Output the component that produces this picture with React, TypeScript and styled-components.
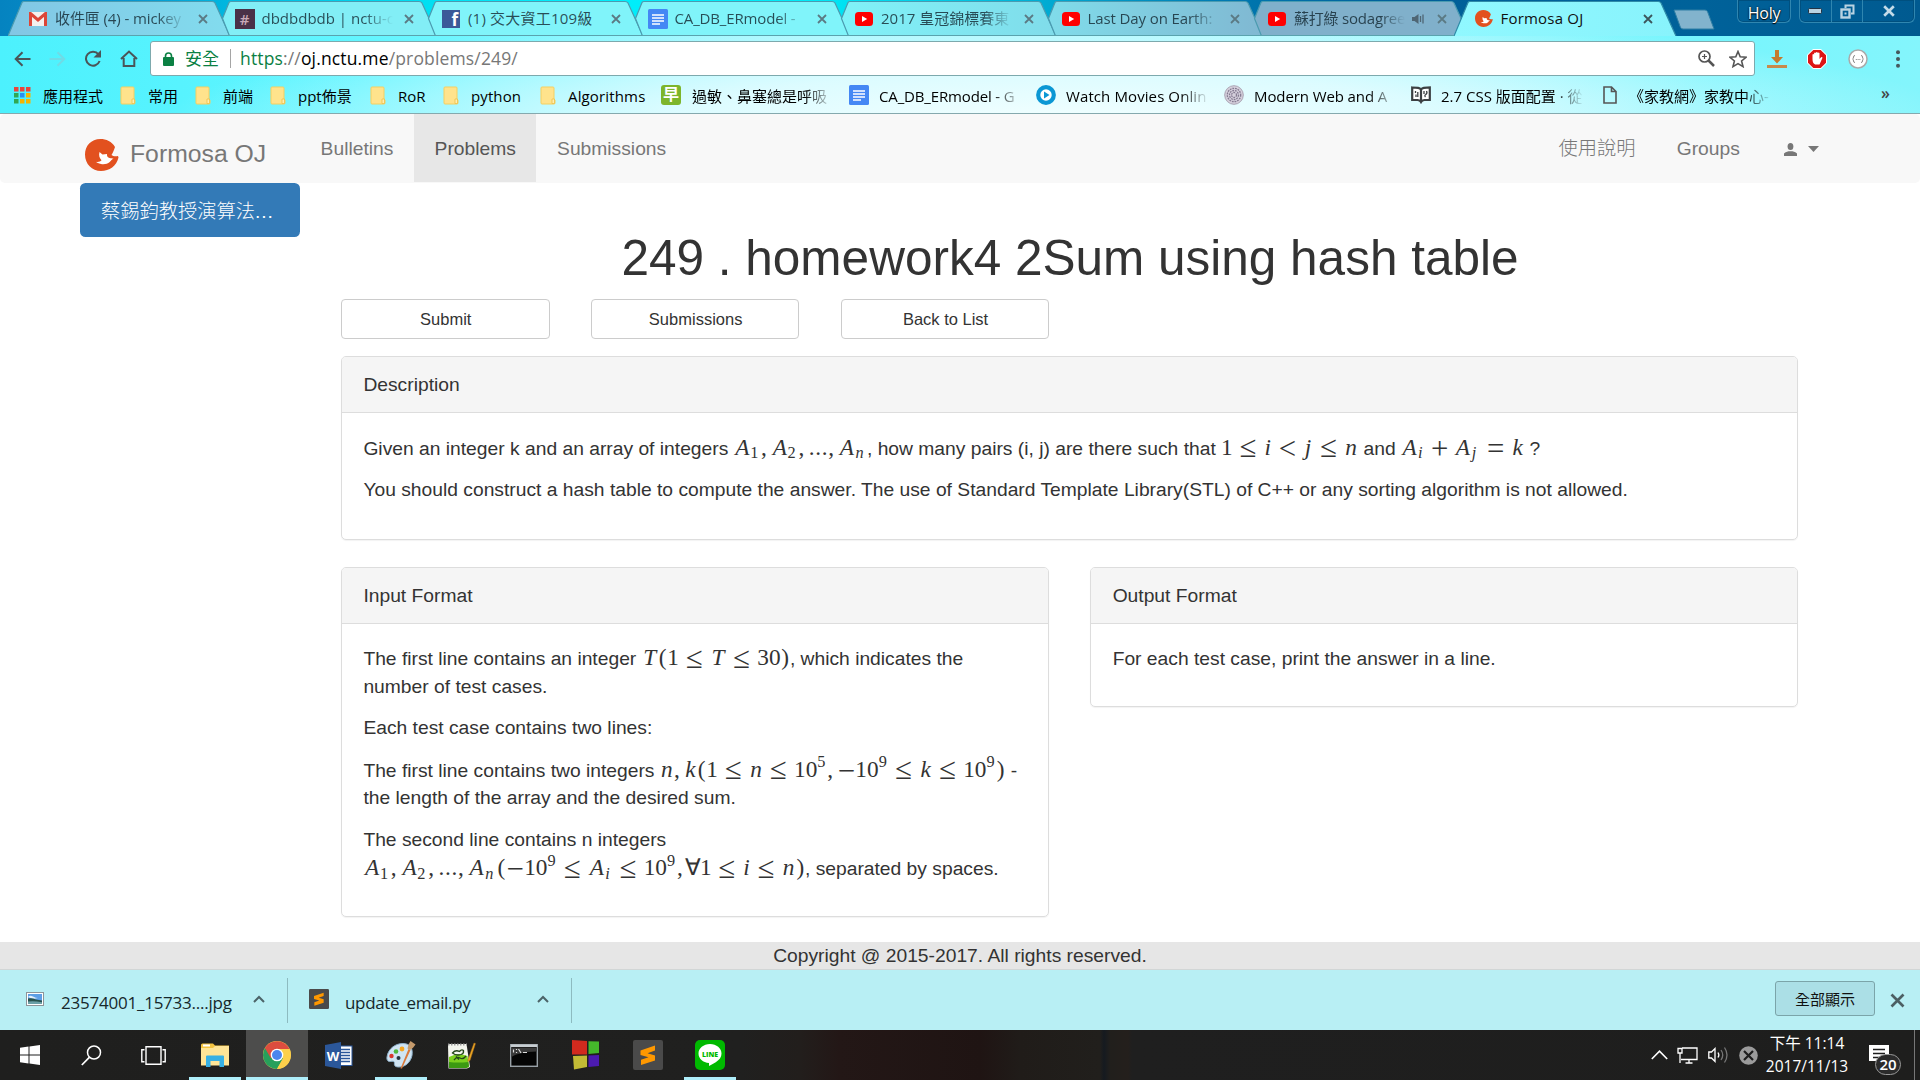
import React from "react";
import styled, { createGlobalStyle, css } from "styled-components";

const ui = `"Open Sans", "Noto Sans CJK TC", sans-serif`;
const body = `"Liberation Sans", "Noto Sans CJK TC", Arial, sans-serif`;

const Global = createGlobalStyle`
  html, body { margin: 0; padding: 0; background: #fff; overflow: hidden; }
  * { box-sizing: border-box; }
  svg { display: block; flex: none; }
`;

const Screen = styled.div`
  width: 1920px;
  height: 1080px;
  display: flex;
  flex-direction: column;
  overflow: hidden;
  background: #fff;
  font-family: ${body};
`;

/* ---------- tab strip ---------- */

const TabStrip = styled.div`
  height: 36px;
  flex: none;
  display: flex;
  align-items: flex-start;
  padding-left: 8px;
  background: linear-gradient(
    90deg, #0583c0 0, #0795cf 130px, #00b8e0 230px, #00dcf0 400px, #00eefb 560px, #00ecf8 800px,
    #00c8e4 960px, #00a0cc 1080px, #0078b0 1230px, #005f98 1400px, #00629a 1700px, #005a90 1920px
  );
`;

const TabBox = styled.div<{ $order: number }>`
  position: relative;
  z-index: ${(p) => p.$order};
  width: 206.5px;
  height: 36px;
  flex: none;
  display: flex;
  align-items: center;
  padding: 1px 2.5px 0 20px;
  gap: 7px;
`;

const TabShape = styled.svg`
  position: absolute;
  left: 0;
  top: 0;
  z-index: -1;
`;

const TabIcon = styled.div`
  width: 20px;
  height: 20px;
  display: flex;
  align-items: center;
  justify-content: center;
`;

const TabTitle = styled.div<{ $active?: boolean; $fade?: boolean; $spacing?: number }>`
  flex: 1;
  min-width: 0;
  height: 24px;
  line-height: 22px;
  overflow: hidden;
  white-space: nowrap;
  font-family: ${ui};
  font-size: 15px;
  letter-spacing: ${(p) => p.$spacing ?? 0}px;
  color: ${(p) => (p.$active ? "#111" : "rgba(20,40,50,.82)")};
  ${(p) => p.$fade && css`mask-image: linear-gradient(90deg, #000 78%, transparent 100%);`}
`;

const CloseSlot = styled.div`
  width: 19px;
  height: 20px;
  display: flex;
  align-items: center;
  justify-content: center;
`;

const NewTab = styled.svg`
  margin: 9px 0 0 13px;
`;

const WindowTools = styled.div`
  margin-left: auto;
  display: flex;
  align-items: flex-start;
`;

const Chip = styled.div<{ $w: number }>`
  width: ${(p) => p.$w}px;
  height: 23px;
  display: flex;
  align-items: center;
  justify-content: center;
  border: 1px solid #2f86b0;
  border-top: 0;
  border-radius: 0 0 6px 6px;
  box-shadow: inset 0 0 0 1px #00507f;
  color: #fff;
  font: 16px/22px ${ui};
  letter-spacing: -0.3px;
  padding-top: 3px;
  text-shadow: 0 0 2px #000, 0 1px 1px #000;
`;

const WinGroup = styled(Chip)`
  margin: 0 5px 0 8px;
  padding-top: 0;
`;

const WinButton = styled.div<{ $w: number; $line?: boolean }>`
  width: ${(p) => p.$w}px;
  height: 22px;
  display: flex;
  align-items: center;
  justify-content: center;
  border-left: ${(p) => (p.$line ? "1px solid #2f86b0" : "0")};
`;

/* ---------- toolbar and bookmarks ---------- */

const ChromeTop = styled.div`
  height: 78px;
  flex: none;
  border-bottom: 1px solid #85a9ae;
  background:
    radial-gradient(ellipse 900px 120px at 1060px 90px, rgba(244,255,255,1) 0%, rgba(226,252,255,.92) 45%, rgba(200,250,255,0) 100%),
    linear-gradient(90deg, #4cf1fd 0, #62f5ff 360px, #96f7ff 760px, #a0f8ff 1300px, #76f5fd 1700px, #84f5fc 1920px);
`;

const Toolbar = styled.div`
  height: 42px;
  display: flex;
  align-items: center;
  padding: 3px 12px 0 14px;
`;

const NavIcons = styled.div`
  width: 136px;
  display: flex;
  align-items: center;
  gap: 18px;
`;

const Omnibox = styled.div`
  width: 1605px;
  height: 35px;
  display: flex;
  align-items: center;
  padding: 0 7px 0 12px;
  background: #fff;
  border: 1px solid #7da9ad;
  border-radius: 3px;
  font: 17.5px/33px ${ui};
  color: #777;
`;

const Secure = styled.span`
  color: #0b8043;
  width: 45px;
  margin-left: 11px;
  font-size: 17px;
`;

const UrlText = styled.span`
  flex: 1;
  padding-left: 9px;
  border-left: 1px solid #a5a5a5;
  line-height: 19px;
  letter-spacing: 0.15px;
`;

const Scheme = styled.span` color: #0b8043; `;
const Host = styled.span` color: #000; `;

const OmniIcons = styled.div`
  display: flex;
  gap: 14px;
  align-items: center;
`;

const Extensions = styled.div`
  display: flex;
  flex: 1;
  align-items: center;
  justify-content: space-between;
  padding-left: 12px;
`;

const Bookmarks = styled.div`
  height: 35px;
  display: flex;
  align-items: center;
  padding: 0 30px 1px 14px;
`;

const Bookmark = styled.div<{ $w: number; $gap?: number }>`
  width: ${(p) => p.$w}px;
  display: flex;
  align-items: center;
  gap: ${(p) => p.$gap ?? 12}px;
`;

const BookmarkText = styled.span<{ $w?: number; $spacing?: number }>`
  font: 15px/26px ${ui};
  height: 25px;
  color: #000;
  white-space: nowrap;
  letter-spacing: ${(p) => p.$spacing ?? 0}px;
  ${(p) => p.$w && css`width: ${p.$w}px; mask-image: linear-gradient(90deg, #000 80%, transparent 100%);`}
`;

const More = styled.span`
  margin-left: auto;
  font: 600 16px/18px ${ui};
  padding-bottom: 4px;
  color: #444;
`;

const GlyphBadge = styled.div`
  width: 20px;
  height: 20px;
  border-radius: 3px;
  background: #7db52b;
  color: #fff;
  font: 700 16px/19px ${ui};
  text-align: center;
`;

const HashBadge = styled.div`
  width: 20px;
  height: 20px;
  background: #4a3148;
  color: #c9a9b8;
  font: 600 15px/20px ${ui};
  text-align: center;
`;

const FbBadge = styled.div`
  width: 18px;
  height: 18px;
  background: #3b5998;
  color: #fff;
  font: 700 17px/19px ${ui};
  text-align: right;
  padding-right: 2px;
`;

/* ---------- page ---------- */

const Navbar = styled.nav`
  height: 69px;
  flex: none;
  display: flex;
  background: #f8f8f8;
  border-radius: 5px;
  padding: 0 81px 0 85px;
  font-size: 19.25px;
  font-weight: 300;
  color: #777;
`;

const Brand = styled.div`
  width: 215px;
  display: flex;
  align-items: flex-start;
  padding-top: 25px;
  gap: 11px;
  font-size: 24.75px;
  line-height: 30px;
  white-space: nowrap;
`;

const NavItem = styled.div<{ $active?: boolean }>`
  height: 68px;
  padding: 21px 20.6px 19px;
  line-height: 28px;
  white-space: nowrap;
  color: ${(p) => (p.$active ? "#555" : "#777")};
  background: ${(p) => (p.$active ? "#e7e7e7" : "transparent")};
`;

const NavRight = styled.div`
  margin-left: auto;
  display: flex;
`;

const UserMenu = styled(NavItem)`
  display: flex;
  align-items: center;
  gap: 11px;
  padding: 2px 19.6px 0 24px;
`;

const Page = styled.main`
  height: 759px;
  flex: none;
  display: flex;
  padding: 0 122px 0 80px;
  color: #333;
  font-size: 19.25px;
  line-height: 27.5px;
`;

const Sidebar = styled.aside`
  width: 261px;
  flex: none;
`;

const GroupPill = styled.div`
  width: 220px;
  height: 54px;
  padding: 0 21px;
  line-height: 58px;
  border-radius: 5.5px;
  background: #337ab7;
  color: #fff;
  font-weight: 300;
  white-space: nowrap;
`;

const Ellipsis = styled.span`
  letter-spacing: 0.9px;
`;

const Main = styled.section`
  flex: 1;
  min-width: 0;
`;

const Title = styled.h1`
  margin: 0;
  padding: 48px 0 13.5px 1px;
  font-size: 49.5px;
  line-height: 54.5px;
  font-weight: 400;
  text-align: center;
`;

const Actions = styled.div`
  display: flex;
  gap: 41.4px;
  margin-bottom: 17px;
`;

const Action = styled.button`
  width: 208.5px;
  height: 40px;
  padding: 0 0 0 1px;
  border: 1px solid #ccc;
  border-radius: 4px;
  background: #fff;
  color: #333;
  font: 16.5px/24px ${body};
`;

const Columns = styled.div`
  display: grid;
  grid-template-columns: 1fr 1fr;
  column-gap: 41.5px;
  align-items: start;
`;

const PanelBox = styled.div<{ $h: number }>`
  height: ${(p) => p.$h}px;
  margin-bottom: 27.5px;
  border: 1px solid #ddd;
  border-radius: 5px;
  box-shadow: 0 1px 1px rgba(0, 0, 0, 0.05);
  overflow: hidden;
`;

const PanelHead = styled.div`
  height: 56px;
  padding: 13.5px 21.4px;
  background: #f5f5f5;
  border-bottom: 1px solid #ddd;
`;

const PanelBody = styled.div`
  padding: 20.6px 21.4px;
`;

const Para = styled.p<{ $lead?: number }>`
  margin: 0 0 13.75px;
  padding-top: ${(p) => p.$lead ?? 0}px;
  white-space: nowrap;
`;

const FormulaLine = styled.span`
  display: block;
  padding-top: 1.5px;
`;

const Footer = styled.footer`
  height: 28px;
  flex: none;
  background: #e6e6e6;
  border-bottom: 1px solid #d2d6d6;
  text-align: center;
  color: #333;
  font-size: 19.25px;
  line-height: 27px;
`;

/* ---------- math ---------- */

const MathBox = styled.span`
  display: inline-flex;
  align-items: baseline;
  height: 22px;
  line-height: 22px;
  font-family: "Liberation Serif", serif;
  font-size: 23.3px;
  white-space: nowrap;
`;

const Atom = styled.span<{ $w: number; $kind: string; $italic: boolean }>`
  display: inline-flex;
  justify-content: center;
  line-height: 20px;
  width: ${(p) => p.$w}em;
  font-style: ${(p) => (p.$italic ? "italic" : "normal")};
  ${(p) => p.$kind === "rel" && css`margin: 0 0.278em;`}
  ${(p) => p.$kind === "bin" && css`margin: 0 0.222em;`}
  ${(p) => p.$kind === "punct" && css`margin-right: 0.167em;`}
  ${(p) => p.$kind === "sub" && css`font-size: 0.7em; position: relative; top: 0.21em; left: -0.06em; margin-right: 0.09em;`}
  ${(p) => p.$kind === "sup" && css`font-size: 0.7em; position: relative; top: -0.56em; margin-right: 0.09em;`}
`;

const Wide = styled.span<{ $drop: number }>`
  position: relative;
  top: ${(p) => p.$drop}em;
  font-size: 1.32em;
  line-height: 16px;
`;

const widths: Record<string, number> = {
  A: 0.75, n: 0.6, k: 0.552, i: 0.345, j: 0.44, T: 0.7,
  ",": 0.278, ".": 0.278, "(": 0.4, ")": 0.4, "∀": 0.556,
  "≤": 0.778, "<": 0.778, "=": 0.778, "+": 0.778, "−": 0.778,
};

/* Reads a compact notation: _x is a subscript, ^x a superscript. */
const Tex = ({ children }: { children: string }) => {
  const out: React.ReactNode[] = [];
  let script = "";
  [...children].forEach((c, i) => {
    if (c === "_" || c === "^") {
      script = c === "_" ? "sub" : "sup";
      return;
    }
    const wide = "≤<=+−".includes(c);
    let kind = script;
    if (!kind) kind = "≤<=".includes(c) ? "rel" : c === "+" ? "bin" : c === "," ? "punct" : "ord";
    out.push(
      <Atom key={i} $w={widths[c] ?? 0.5} $kind={kind} $italic={/[A-Za-z]/.test(c)}>
        {wide ? <Wide $drop={c === "≤" ? 0.08 : 0.13}>{c}</Wide> : c}
      </Atom>
    );
    script = "";
  });
  return <MathBox>{out}</MathBox>;
};

/* ---------- downloads shelf ---------- */

const Shelf = styled.div`
  height: 60px;
  flex: none;
  display: flex;
  align-items: center;
  padding-right: 15px;
  background: #b8eff4;
  font-family: ${ui};
`;

const Download = styled.div<{ $w: number; $pad: number }>`
  width: ${(p) => p.$w}px;
  height: 45px;
  display: flex;
  align-items: center;
  padding: 0 22px 2px ${(p) => p.$pad}px;
  border-right: 1px solid #8dbbc0;
`;

const FileName = styled.span<{ $gap: number; $spacing: number }>`
  flex: 1;
  margin-left: ${(p) => p.$gap}px;
  padding-top: 8px;
  font-size: 17px;
  line-height: 24px;
  letter-spacing: ${(p) => p.$spacing}px;
  color: #16282b;
`;

const ShowAll = styled.button`
  width: 100px;
  height: 35px;
  margin: 0 15px 3px auto;
  padding: 0;
  border: 1px solid #7ba4a9;
  border-radius: 3px;
  background: #abdfe6;
  color: #111;
  font: 15px/30px ${ui};
`;

/* ---------- taskbar ---------- */

const Taskbar = styled.div`
  height: 50px;
  flex: none;
  display: flex;
  background: linear-gradient(
    90deg, #1f1f1e 0, #20201f 740px, #221e1c 800px, #231716 840px, #1f1413 980px, #201c19 1020px,
    #211f1c 1100px, #151a20 1104px, #211f1c 1110px, #241f1c 1128px, #1f1f1f 1132px, #1e1e1d 1920px
  );
`;

const Tasks = styled.div`
  display: flex;
  margin-left: -1px;
`;

const Task = styled.div<{ $active?: boolean; $running?: boolean }>`
  position: relative;
  width: 61.8px;
  height: 50px;
  display: flex;
  align-items: center;
  justify-content: center;
  background: ${(p) => (p.$active ? "#4d4d4c" : "transparent")};
  ${(p) =>
    (p.$running || p.$active) &&
    css`
      &::after {
        content: "";
        position: absolute;
        bottom: 0;
        left: ${p.$active ? 0 : 5}px;
        right: ${p.$active ? 0 : 5}px;
        height: 3px;
        background: #aeeefa;
      }
    `}
`;

const Tray = styled.div`
  margin-left: auto;
  display: flex;
  align-items: center;
`;

const Clock = styled.div`
  width: 84px;
  margin: 0 20px 0 7px;
  display: flex;
  flex-direction: column;
  align-items: center;
  color: #fff;
  white-space: nowrap;
  font: 15.5px/23px ${ui};
`;

const Notice = styled.div`
  position: relative;
  width: 46px;
  height: 50px;
  padding-top: 15px;
  border-right: 1px solid #777;
  margin-right: 5px;
`;

const Count = styled.span`
  position: absolute;
  left: 6px;
  top: 24px;
  width: 26px;
  height: 21px;
  border: 1px solid #999;
  border-radius: 11px;
  background: #2b2b2b;
  color: #fff;
  font: 600 15px/18px ${ui};
  text-align: center;
`;

/* ---------- drawings ---------- */

const Cross = ({ s = 10, c = "#4f6f78", w = 1.8 }) => (
  <svg width={s} height={s} viewBox="0 0 10 10">
    <path d="M1 1l8 8M9 1l-8 8" stroke={c} strokeWidth={w} />
  </svg>
);

const Gmail = () => (
  <svg width="18" height="14" viewBox="0 0 18 14">
    <rect width="18" height="14" rx="1.5" fill="#f4f0ee" />
    <path d="M1.5 14V1.5L9 8l7.500-6.500V14" fill="none" stroke="#dc4638" strokeWidth="3" />
  </svg>
);

const Doc = () => (
  <svg width="20" height="20" viewBox="0 0 20 20">
    <rect width="20" height="20" rx="1.500" fill="#4487f4" />
    <path d="M4 6h12M4 9h12M4 12h12M4 15h8" stroke="#fff" strokeWidth="1.500" />
  </svg>
);

const Tube = () => (
  <svg width="18" height="14" viewBox="0 0 18 14">
    <rect width="18" height="14" rx="3.500" fill="#f00" />
    <path d="M7 4l5.200 3L7 10z" fill="#fff" />
  </svg>
);

const Fox = ({ w = 34 }) => (
  <svg width={w} height={(w * 32) / 34} viewBox="0 0 34 32">
    <path
      d="M30 8C27 2.500 21 0 15.500 0 6 0 0 7 0 15.500 0 25 7 32 16 32c8.500 0 15.500-5 17.500-13.500l-.5-1.500c-2.500.8-5 .2-6.500-1 2-3 2.500-5.500 3.500-8z"
      fill="#e2511f"
    />
    <path
      d="M14.500 13l3 2.500 4.500-.5c-.3 2.500 1 4 3.500 4.300 1.500.2 2 .2 3 .2-1.500 1-2.500 1.800-3.800 3.500-2.200 2-5.500 2.500-8.700 2-2.500-.3-4-1.200-5-2.200 2 .5 4.500 0 5.500-1.500-2-2-3-5-2-8.300z"
      fill="#fff"
    />
  </svg>
);

const Folder = () => (
  <svg width="16" height="19" viewBox="0 0 16 19">
    <path d="M1 2q0-1 1-1h11q1 0 1 1v11l1 1v3q0 1-1 1H2q-1 0-1-1z" fill="#ffe38c" stroke="#f5cf61" />
    <path d="M12 17.500v-4.500h2.500v4.500z" fill="#ffeeb0" stroke="#eec04a" strokeWidth=".8" />
  </svg>
);

const Apps = () => (
  <svg width="17" height="17" viewBox="0 0 17 17">
    {["#e8453c", "#e8453c", "#e8453c", "#30a853", "#2a8ef0", "#f5b400", "#30a853", "#f5b400", "#f5b400"].map((c, i) => (
      <rect key={i} x={(i % 3) * 6} y={Math.floor(i / 3) * 6} width="4.500" height="4.500" fill={c} />
    ))}
  </svg>
);

const Sublime = ({ s = 30 }) => (
  <svg width={s} height={s} viewBox="0 0 30 30">
    <rect width="30" height="30" rx="2" fill="#4a4a4a" />
    <path d="M7.500 10.500L22 5.500v5l-7.500 2.800L22 15.500v5L8 25v-5.200l7.500-2.500-8-2.300z" fill="#ff9800" />
  </svg>
);

const Caret = () => (
  <svg width="12" height="8" viewBox="0 0 12 8">
    <path d="M1 7l5-5 5 5" fill="none" stroke="#4c6468" strokeWidth="2" />
  </svg>
);

const BackArrow = ({ flip = false, c = "#4a5558" }) => (
  <svg width="17" height="16" viewBox="0 0 17 16" transform={flip ? "scale(-1 1)" : undefined}>
    <path d="M16.500 8H2M8.500 1.200L1.700 8l6.800 6.800" fill="none" stroke={c} strokeWidth="2" />
  </svg>
);

const Reload = () => (
  <svg width="18" height="17" viewBox="0 0 18 17">
    <path d="M14.500 4.300A7 7 0 1 0 15.600 11" fill="none" stroke="#4a5558" strokeWidth="2" />
    <path d="M17 0v7.500H9.500z" fill="#4a5558" />
  </svg>
);

const Home = () => (
  <svg width="18" height="17" viewBox="0 0 18 17">
    <path d="M1 9L9 1.500 17 9M3.700 8v8h10.600V8" fill="none" stroke="#4a5558" strokeWidth="2" />
  </svg>
);

const Lock = () => (
  <svg width="11" height="14" viewBox="0 0 11 14">
    <rect y="5" width="11" height="9" rx="1" fill="#0b8043" />
    <path d="M2.500 6V4a3 3 0 0 1 6 0v2" fill="none" stroke="#0b8043" strokeWidth="1.600" />
  </svg>
);

const ZoomGlass = () => (
  <svg width="17" height="17" viewBox="0 0 17 17">
    <circle cx="6.500" cy="6.500" r="5.500" fill="none" stroke="#555" strokeWidth="1.700" />
    <path d="M4 6.500h5M6.500 4v5" stroke="#555" strokeWidth="1.200" />
    <path d="M10.500 10.500L16 16" stroke="#555" strokeWidth="2.500" />
  </svg>
);

const Star = () => (
  <svg width="18" height="18" viewBox="0 0 18 18">
    <path d="M9 1.500l2.200 5.300 5.800.5-4.400 3.700 1.400 5.600L9 13.600l-5 3 1.400-5.600L1 7.300l5.800-.5z" fill="none" stroke="#555" strokeWidth="1.600" />
  </svg>
);

const GetArrow = () => (
  <svg width="20" height="18" viewBox="0 0 20 18">
    <path d="M8 0h4v7h4l-6 6.500L4 7h4z" fill="#c47a2c" />
    <rect y="15" width="20" height="3" fill="#c88a4a" />
  </svg>
);

const Adblock = () => (
  <svg width="20" height="20" viewBox="0 0 20 20">
    <path d="M6 0h8l6 6v8l-6 6H6l-6-6V6z" fill="#fff" />
    <path d="M6.300 1h7.400L19 6.300v7.400L13.700 19H6.300L1 13.700V6.300z" fill="#dd1414" />
    <path d="M5.500 10V5.500q.8-1 1.600 0V4q.9-1.200 1.800 0v-.6q.9-1 1.800 0V4q1-1 1.800 0v6l1.600-1.800q1.500-.4 1.300.7l-2.900 6.600H8.200q-2.700-1-2.700-5.500z" fill="#fff" />
  </svg>
);

const Braces = () => (
  <svg width="20" height="20" viewBox="0 0 20 20">
    <circle cx="10" cy="10" r="9" fill="#fff" stroke="#aaa" strokeWidth="1.500" />
    <path d="M7 6.500q-1.500 0-1.500 1.500t-1 2q1 .5 1 2T7 13.500M13 6.500q1.500 0 1.500 1.500t1 2q-1 .5-1 2t-1.500 1.500" fill="none" stroke="#888" />
    <path d="M7.800 10.500h1M9.600 10.500h1M11.400 10.500h1" stroke="#888" />
  </svg>
);

const Dots = () => (
  <svg width="20" height="18" viewBox="0 0 20 18">
    {[2.200, 9, 15.800].map((y) => <circle key={y} cx="10" cy={y} r="2" fill="#46595d" />)}
  </svg>
);

const Play = () => (
  <svg width="20" height="20" viewBox="0 0 20 20">
    <circle cx="10" cy="10" r="7.800" fill="#fff" stroke="#0b97d4" strokeWidth="4.200" />
    <path d="M8 6.500l5.500 3.500L8 13.500z" fill="#0b97d4" />
  </svg>
);

const Mesh = () => (
  <svg width="20" height="20" viewBox="0 0 20 20">
    <circle cx="10" cy="10" r="9.300" fill="#d5d0dc" stroke="#aaa3b3" />
    {[2.500, 4.500, 6.700].map((r) => (
      <circle key={r} cx="10" cy="10" r={r} fill="none" stroke="#857b92" strokeWidth="1.300" strokeDasharray="1.800 .9" />
    ))}
  </svg>
);

const Book = () => (
  <svg width="20" height="18" viewBox="0 0 20 18">
    <path d="M1.200 1.500l6 .3Q9 2 10 3.500q1-1.500 2.800-1.700l6-.3v12.500h-5.500Q11 14.200 10 16q-1-1.800-3.300-2H1.200zM10 3v13" fill="#fff" stroke="#3b3f42" strokeWidth="2.200" />
    <path d="M4.500 5v2M5 8.500v2.500M6.800 6v5M13 5v3M15.500 5q1.200 2-.8 3.500-1.500 1-.2 2.500" fill="none" stroke="#3b3f42" strokeWidth="1.300" />
  </svg>
);

const PageIcon = () => (
  <svg width="14" height="18" viewBox="0 0 14 18">
    <path d="M1 1h7.500L13 5.500V17H1zM8.500 1v4.500H13" fill="none" stroke="#555" strokeWidth="1.600" />
  </svg>
);

const Speaker = () => (
  <svg width="13" height="12" viewBox="0 0 13 12">
    <path d="M0 4h2.500L6.500 1v10L2.500 8H0z" fill="#4f6674" />
    <path d="M8.500 3v6M11 1.500v9" stroke="#4f6674" strokeWidth="1.300" />
  </svg>
);

const User = () => (
  <svg width="13" height="13" viewBox="0 0 13 13">
    <ellipse cx="6.500" cy="3.500" rx="2.900" ry="3.500" fill="#777" />
    <path d="M0 13v-2.500Q1 9 4.500 8.200h4Q12 9 13 10.500V13z" fill="#777" />
  </svg>
);

const Picture = () => (
  <svg width="18" height="14" viewBox="0 0 18 14">
    <rect x=".5" y=".5" width="17" height="13" fill="#fff" stroke="#8d9499" />
    <rect x="2" y="2" width="14" height="10" fill="#5d9fe6" />
    <path d="M2 5q2-2 5-.5t5 1.500l-5 1z" fill="#e3f0fb" />
    <path d="M2 6.500q4-1 8 1l6 1v3.500H2z" fill="#28524e" />
    <path d="M2 9.500q6-1 14 .8V12H2z" fill="#6ba0a8" />
  </svg>
);

const Windows = () => (
  <svg width="20" height="20" viewBox="0 0 20 20">
    <path d="M0 2.800l8.500-1.200v7.900H0zM9.500 1.400L20 0v9.500H9.500zM0 10.500h8.500v7.900L0 17.200zM9.500 10.500H20V20L9.500 18.600z" fill="#fff" />
  </svg>
);

const Search = () => (
  <svg width="21" height="21" viewBox="0 0 21 21">
    <circle cx="13" cy="7.500" r="6.500" fill="none" stroke="#fff" strokeWidth="1.500" />
    <path d="M8.300 12.300L.8 20" stroke="#fff" strokeWidth="1.700" />
  </svg>
);

const TaskView = () => (
  <svg width="25" height="19" viewBox="0 0 25 19">
    <path d="M5 .7h15v17.600H5zM3.500 3.700H.8v12h2.700M21.500 3.700h2.700v12h-2.700" fill="none" stroke="#fff" strokeWidth="1.400" />
  </svg>
);

const Explorer = () => (
  <svg width="28" height="24" viewBox="0 0 28 24">
    <path d="M0 2q0-1.500 1.500-1.500H12l2 2h14V22H0z" fill="#f5c542" />
    <path d="M0 5h12l2-2h14v19.500H0z" fill="#ffe597" />
    <rect x="2" y="1.500" width="7" height="2" fill="#fff" />
    <path d="M5 13.500q0-1 1-1h16q1 0 1 1V24h-4.500v-6h-9v6H5z" fill="#37b0e4" />
  </svg>
);

const ChromeLogo = () => (
  <svg width="28" height="28" viewBox="0 0 28 28">
    <circle cx="14" cy="14" r="14" fill="#fdd04b" />
    <path d="M14 14L1.880 7A14 14 0 0 0 14 28l6-10.500z" fill="#27a05b" />
    <path d="M1.880 7A14 14 0 0 1 26.500 8H14l-6 9.500z" fill="#dc4d3f" />
    <path d="M14 28L20 17.500 26.500 8A14 14 0 0 1 14 28z" fill="#fdd04b" />
    <circle cx="14" cy="14" r="6.300" fill="#fff" />
    <circle cx="14" cy="14" r="5" fill="#4b86ee" />
  </svg>
);

const Word = () => (
  <svg width="28" height="27" viewBox="0 0 28 27">
    <rect x="13" y="4" width="14" height="19.500" fill="#fff" stroke="#2b579a" />
    <path d="M16 7.500h9M16 10.500h9M16 13.500h9M16 16.500h9M16 19.500h9" stroke="#2b579a" strokeWidth="1.500" />
    <path d="M0 3L16 0v27L0 24z" fill="#2b579a" />
    <text x="8" y="18.500" fill="#fff" fontFamily="Open Sans" fontWeight="700" fontSize="13" textAnchor="middle">W</text>
  </svg>
);

const Paint = () => (
  <svg width="30" height="28" viewBox="0 0 30 28">
    <path d="M1 16C2 8 9 2.500 17 2.500c8 0 10 6 9 12-1.500 7-7 11.500-13 11.500-4 0-5-1.500-4.500-4 0-2-2-2-4-1.500C2 21 .5 19 1 16z" fill="#cfe4f3" stroke="#8fb2cc" />
    <circle cx="5.500" cy="15" r="2.200" fill="#d8382e" />
    <circle cx="10" cy="10.500" r="2.300" fill="#50b83c" />
    <circle cx="16" cy="8" r="2.400" fill="#f5a623" />
    <circle cx="12.500" cy="17" r="2" fill="#26343d" />
    <path d="M14.500 27.500L22.500 8l2 1L16 27.500z" fill="#d9783a" />
    <path d="M21.500 7.500q.5-4.500 3-7.500l5 3.500q-2 3.500-5.500 5.500z" fill="#c49a6c" />
  </svg>
);

const Notepad = () => (
  <svg width="28" height="27" viewBox="0 0 28 27">
    <path d="M0 2h18.500l3.500 23-3 1.500H.5z" fill="#f4f6ee" />
    <path d="M1 15q9-5 18.500-1l1.500 11-2.500 1H1z" fill="#7cd11f" />
    <path d="M1 20q9 1 19.500 0l.5 4.500-2.500 1.500H1z" fill="#3c9a12" />
    <path d="M4.500 11q3-3.500 7-1.500 2-2.500 4-1 .5 3-2.500 4-5 1.500-8.500-1.500zM6 18q3-4 6-2t6-2M8 14.500l3 3" fill="none" stroke="#24451a" strokeWidth="1.300" />
    <path d="M0 2.500h19" stroke="#999" strokeWidth="2" strokeDasharray="1.500 1.500" />
    <path d="M20 17.500L26 1l1.500.6L22 18.500l-2 1z" fill="#eda823" stroke="#a4681a" strokeWidth=".5" />
  </svg>
);

const Cmd = () => (
  <svg width="28" height="23" viewBox="0 0 28 23">
    <rect x=".7" y=".7" width="26.600" height="21.600" fill="#050505" stroke="#98a0a6" strokeWidth="1.400" />
    <rect x="1" y=".5" width="26" height="2.500" fill="#c7cdd1" />
    <path d="M1.500 3.500h25v4Q8 8 1.500 13z" fill="#3a3a3a" />
    <path d="M3.500 5.500v3M6.500 5v1M6.500 8v1M8.500 5l2.500 4M13 8.500h4" stroke="#ddd" strokeWidth="1.200" />
  </svg>
);

const Blocks = () => (
  <svg width="28" height="30" viewBox="0 0 28 30">
    <path d="M0 0l15 1v13.500H0z" fill="#d12a1e" />
    <path d="M16.500 1.200L27 1.500V13l-10.500 1z" fill="#45b82b" />
    <path d="M1 16l14-.5V27L2 29.500z" fill="#c2bb35" />
    <path d="M16.500 15.500L27 15v11l-10.500 1z" fill="#4c1bb0" />
  </svg>
);

const Line = () => (
  <svg width="30" height="30" viewBox="0 0 30 30">
    <rect width="30" height="30" rx="5" fill="#00b900" />
    <path d="M15 4C8.500 4 3.500 8.300 3.500 13.500S8 22.500 14 23v3q8-4 11-7.500 1.500-2.300 1.500-5C26.500 8.300 21.500 4 15 4z" fill="#fff" />
    <text x="15" y="16.500" fill="#00b900" fontFamily="Open Sans" fontWeight="800" fontSize="7" textAnchor="middle">LINE</text>
  </svg>
);

const TrayUp = () => (
  <svg width="17" height="10" viewBox="0 0 17 10">
    <path d="M.8 9L8.500 1.200 16.200 9" fill="none" stroke="#fff" strokeWidth="1.600" />
  </svg>
);

const Network = () => (
  <svg width="21" height="17" viewBox="0 0 21 17">
    <path d="M5 1h15v11.500H4M12 12.500V16M8.500 16h7M1 1.500h4v4.500H1zM3 6v10" fill="none" stroke="#fff" strokeWidth="1.300" />
  </svg>
);

const Volume = () => (
  <svg width="22" height="18" viewBox="0 0 22 18">
    <path d="M.8 6h2.700L7 2.500v13L3.500 12H.8z" fill="none" stroke="#fff" strokeWidth="1.300" />
    <path d="M10 6.500q1.700 2.500 0 5" fill="none" stroke="#fff" strokeWidth="1.300" />
    <path d="M13 4q3.500 5 0 10M16.500 1.500q5 7.500 0 15" fill="none" stroke="#777" strokeWidth="1.300" />
  </svg>
);

const TrayCross = () => (
  <svg width="19" height="19" viewBox="0 0 19 19">
    <circle cx="9.500" cy="9.500" r="9.300" fill="#9b9b9b" />
    <path d="M5 5l9 9M14 5l-9 9" stroke="#1d1d1d" strokeWidth="2.200" />
  </svg>
);

const TrayIcons = styled.div`
  display: flex;
  align-items: center;
  gap: 9.5px;
`;

const NoteIcon = () => (
  <svg width="20" height="20" viewBox="0 0 20 20">
    <path d="M0 0h20v16h-8l-4 4v-4H0z" fill="#fff" />
    <path d="M4 4.500h12M4 8.500h12M4 12.500h7" stroke="#1e1e1e" strokeWidth="1.300" />
  </svg>
);

/* ---------- data ---------- */

type TabInfo = { icon: React.ReactNode; title: string; fill: string; fade?: boolean; sound?: boolean; spacing?: number };

const tabs: TabInfo[] = [
  { icon: <Gmail />, title: "收件匣 (4) - mickey", fill: "url(#tabA)", fade: true, spacing: -0.1 },
  { icon: <HashBadge>#</HashBadge>, title: "dbdbdbdb | nctu-c", fill: "#82eef6", fade: true },
  { icon: <FbBadge>f</FbBadge>, title: "(1) 交大資工109級", fill: "#80f4fa", spacing: 0.2 },
  { icon: <Doc />, title: "CA_DB_ERmodel -", fill: "#80f4fa", fade: true, spacing: -0.15 },
  { icon: <Tube />, title: "2017 皇冠錦標賽東", fill: "url(#tabE)", fade: true },
  { icon: <Tube />, title: "Last Day on Earth:", fill: "url(#tabF)", fade: true, spacing: -0.1 },
  { icon: <Tube />, title: "蘇打綠 sodagree", fill: "#80b0cb", fade: true, sound: true, spacing: -0.2 },
  { icon: <Fox w={18} />, title: "Formosa OJ", fill: "url(#tabH)", spacing: 0.2 },
];

const Tabs = () => (
  <>
    {tabs.map((t, i) => {
      const active = i === tabs.length - 1;
      const left = i === 0 || active ? "M0 36L14 2.500" : "M14.500 36L7.500 18.500 14 2.500";
      const right = "Q14.500 1.500 16 1.500H204Q206 1.500 207 3L222 36";
      return (
        <TabBox key={t.title} $order={active ? 9 : 1}>
          <TabShape width="223" height="36" viewBox="0 0 223 36">
            <defs>
              <linearGradient id="tabA"><stop offset="0" stopColor="#82c6e4" /><stop offset="1" stopColor="#82dcee" /></linearGradient>
              <linearGradient id="tabE"><stop offset="0" stopColor="#80f2f8" /><stop offset="1" stopColor="#80dcea" /></linearGradient>
              <linearGradient id="tabF"><stop offset="0" stopColor="#80dcea" /><stop offset="1" stopColor="#80b8d2" /></linearGradient>
              <linearGradient id="tabH"><stop offset="0" stopColor="#90f8ff" /><stop offset="1" stopColor="#88f3fc" /></linearGradient>
            </defs>
            <path d={left + right} fill={t.fill} stroke={active ? "#2f8ba8" : "#4b9bb0"} strokeWidth="1.200" />
            {!active && <path d="M0 35.500H223" stroke="#5aa3ae" />}
          </TabShape>
          <TabIcon>{t.icon}</TabIcon>
          <TabTitle $active={active} $fade={t.fade} $spacing={t.spacing}>{t.title}</TabTitle>
          {t.sound && <Speaker />}
          <CloseSlot><Cross c={active ? "#3c555b" : "#5b7a84"} /></CloseSlot>
        </TabBox>
      );
    })}
  </>
);

const Panel = ({ title, height, children }: { title: string; height: number; children: React.ReactNode }) => (
  <PanelBox $h={height}>
    <PanelHead>{title}</PanelHead>
    <PanelBody>{children}</PanelBody>
  </PanelBox>
);

export default function App() {
  return (
    <Screen>
      <Global />
      <TabStrip>
        <Tabs />
        <NewTab width="42" height="21" viewBox="0 0 42 21">
          <path d="M1 1h31q2 0 2.700 2L41 20H10q-2 0-2.700-2z" fill="#82b3cd" stroke="#2f7fa5" />
        </NewTab>
        <WindowTools>
          <Chip $w={54}>Holy</Chip>
          <WinGroup $w={116}>
            <WinButton $w={31}>
              <svg width="14" height="6" viewBox="0 0 14 6"><rect x=".5" y=".5" width="13" height="5" rx="1" fill="#b9d3e2" stroke="#234" /></svg>
            </WinButton>
            <WinButton $w={32} $line>
              <svg width="15" height="15" viewBox="0 0 15 15">
                <path d="M5.500 4V1.500h8v8H11" fill="none" stroke="#b9d3e2" strokeWidth="2" />
                <rect x="1.500" y="5.500" width="8" height="8" fill="none" stroke="#b9d3e2" strokeWidth="2.400" />
                <rect x="4.500" y="8.500" width="2" height="2" fill="#b9d3e2" />
              </svg>
            </WinButton>
            <WinButton $w={52} $line><Cross s={12} c="#c4dbe8" w={2.2} /></WinButton>
          </WinGroup>
        </WindowTools>
      </TabStrip>

      <ChromeTop>
        <Toolbar>
          <NavIcons>
            <BackArrow />
            <BackArrow flip c="#6fdbe6" />
            <Reload />
            <Home />
          </NavIcons>
          <Omnibox>
            <Lock />
            <Secure>安全</Secure>
            <UrlText><Scheme>https</Scheme>://<Host>oj.nctu.me</Host>/problems/249/</UrlText>
            <OmniIcons><ZoomGlass /><Star /></OmniIcons>
          </Omnibox>
          <Extensions><GetArrow /><Adblock /><Braces /><Dots /></Extensions>
        </Toolbar>
        <Bookmarks>
          <Bookmark $w={106}><Apps /><BookmarkText>應用程式</BookmarkText></Bookmark>
          <Bookmark $w={75}><Folder /><BookmarkText>常用</BookmarkText></Bookmark>
          <Bookmark $w={75}><Folder /><BookmarkText>前端</BookmarkText></Bookmark>
          <Bookmark $w={100}><Folder /><BookmarkText>ppt佈景</BookmarkText></Bookmark>
          <Bookmark $w={73}><Folder /><BookmarkText>RoR</BookmarkText></Bookmark>
          <Bookmark $w={97}><Folder /><BookmarkText $spacing={0.1}>python</BookmarkText></Bookmark>
          <Bookmark $w={121}><Folder /><BookmarkText $spacing={0.15}>Algorithms</BookmarkText></Bookmark>
          <Bookmark $w={188} $gap={11}><GlyphBadge>早</GlyphBadge><BookmarkText $w={141}>過敏、鼻塞總是呼吸</BookmarkText></Bookmark>
          <Bookmark $w={187} $gap={10}><Doc /><BookmarkText $w={143} $spacing={-0.15}>CA_DB_ERmodel - G</BookmarkText></Bookmark>
          <Bookmark $w={188} $gap={10}><Play /><BookmarkText $w={143} $spacing={0.1}>Watch Movies Onlin</BookmarkText></Bookmark>
          <Bookmark $w={187} $gap={10}><Mesh /><BookmarkText $w={143} $spacing={-0.1}>Modern Web and A</BookmarkText></Bookmark>
          <Bookmark $w={192} $gap={10}><Book /><BookmarkText $w={143}>2.7 CSS 版面配置 · 從</BookmarkText></Bookmark>
          <Bookmark $w={180} $gap={12}><PageIcon /><BookmarkText $w={143}>《家教網》家教中心-</BookmarkText></Bookmark>
          <More>»</More>
        </Bookmarks>
      </ChromeTop>

      <Navbar>
        <Brand><Fox />Formosa OJ</Brand>
        <NavItem>Bulletins</NavItem>
        <NavItem $active>Problems</NavItem>
        <NavItem>Submissions</NavItem>
        <NavRight>
          <NavItem>使用說明</NavItem>
          <NavItem>Groups</NavItem>
          <UserMenu>
            <User />
            <svg width="11" height="6" viewBox="0 0 11 6"><path d="M0 0h11L5.500 6z" fill="#777" /></svg>
          </UserMenu>
        </NavRight>
      </Navbar>

      <Page>
        <Sidebar><GroupPill>蔡錫鈞教授演算法<Ellipsis>...</Ellipsis></GroupPill></Sidebar>
        <Main>
          <Title>249 . homework4 2Sum using hash table</Title>
          <Actions>
            <Action>Submit</Action>
            <Action>Submissions</Action>
            <Action>Back to List</Action>
          </Actions>
          <Panel title="Description" height={183.5}>
            <Para $lead={1}>
              Given an integer k and an array of integers <Tex>A_1,A_2,...,A_n</Tex>, how many pairs (i, j) are there such
              that <Tex>{"1≤i<j≤n"}</Tex> and <Tex>A_i+A_j=k</Tex> ?
            </Para>
            <Para>
              You should construct a hash table to compute the answer. The use of Standard Template Library(STL) of C++ or
              any sorting algorithm is not allowed.
            </Para>
          </Panel>
          <Columns>
            <Panel title="Input Format" height={350}>
              <Para $lead={0.5}>
                The first line contains an integer <Tex>T(1≤T≤30)</Tex>, which indicates the<br />
                number of test cases.
              </Para>
              <Para>Each test case contains two lines:</Para>
              <Para $lead={1.5}>
                The first line contains two integers <Tex>n,k(1≤n≤10^5,−10^9≤k≤10^9)</Tex> -<br />
                the length of the array and the desired sum.
              </Para>
              <Para $lead={1}>
                The second line contains n integers
                <FormulaLine>
                  <Tex>A_1,A_2,...,A_n(−10^9≤A_i≤10^9,∀1≤i≤n)</Tex>, separated by spaces.
                </FormulaLine>
              </Para>
            </Panel>
            <Panel title="Output Format" height={140}>
              <Para>For each test case, print the answer in a line.</Para>
            </Panel>
          </Columns>
        </Main>
      </Page>
      <Footer>Copyright @ 2015-2017. All rights reserved.</Footer>

      <Shelf>
        <Download $w={288} $pad={26}>
          <Picture />
          <FileName $gap={17} $spacing={-0.23}>23574001_15733....jpg</FileName>
          <Caret />
        </Download>
        <Download $w={284} $pad={21}>
          <Sublime s={20} />
          <FileName $gap={16} $spacing={-0.33}>update_email.py</FileName>
          <Caret />
        </Download>
        <ShowAll>全部顯示</ShowAll>
        <Cross s={15} c="#4c5f63" w={1.8} />
      </Shelf>

      <Taskbar>
        <Tasks>
          <Task><Windows /></Task>
          <Task><Search /></Task>
          <Task><TaskView /></Task>
          <Task $running><Explorer /></Task>
          <Task $active><ChromeLogo /></Task>
          <Task><Word /></Task>
          <Task $running><Paint /></Task>
          <Task><Notepad /></Task>
          <Task><Cmd /></Task>
          <Task><Blocks /></Task>
          <Task><Sublime /></Task>
          <Task $running><Line /></Task>
        </Tasks>
        <Tray>
          <TrayIcons>
            <TrayUp />
            <Network />
            <Volume />
            <TrayCross />
          </TrayIcons>
          <Clock><span>下午 11:14</span><span>2017/11/13</span></Clock>
          <Notice><NoteIcon /><Count>20</Count></Notice>
        </Tray>
      </Taskbar>
    </Screen>
  );
}
